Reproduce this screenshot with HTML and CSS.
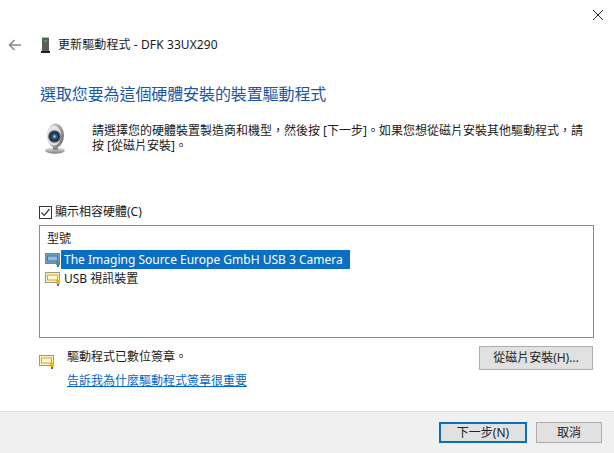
FILE: index.html
```html
<!DOCTYPE html>
<html lang="zh-Hant">
<head>
<meta charset="utf-8">
<title>更新驅動程式</title>
<link rel="stylesheet" href="styles.css">
</head>
<body>
<div class="dialog">
  <div class="titlebar">
    <svg class="close" width="12" height="12" viewBox="0 0 12 12"><path d="M1 1 L11 11 M11 1 L1 11" stroke="#222" stroke-width="1" fill="none"/></svg>
  </div>
  <div class="nav">
    <svg class="back" width="14" height="12" viewBox="0 0 14 12"><path d="M6.5 1 L1.5 6 L6.5 11 M1.5 6 H13" stroke="#8a8a8a" stroke-width="1.6" fill="none"/></svg>
    <svg class="device" width="9" height="16" viewBox="0 0 9 16"><rect x="1" y="0" width="7" height="14" fill="#5a5f5a"/><rect x="1" y="0" width="7" height="1" fill="#b8bcb8"/><rect x="3.5" y="3" width="2" height="2" fill="#35d04a"/><rect x="0" y="14" width="9" height="2" fill="#222"/></svg>
    <span class="nav-title">更新驅動程式 - DFK 33UX290</span>
  </div>
  <main class="content">
    <h1 class="heading">選取您要為這個硬體安裝的裝置驅動程式</h1>
    <div class="intro">
      <svg class="webcam" width="22" height="32" viewBox="0 0 22 32">
        <defs>
          <radialGradient id="lens"><stop offset="0" stop-color="#a8d6f0"/><stop offset="0.45" stop-color="#2b5f8c"/><stop offset="1" stop-color="#16202c"/></radialGradient>
          <linearGradient id="shell" x1="0" y1="0" x2="1" y2="0.6"><stop offset="0" stop-color="#e8e8e8"/><stop offset="1" stop-color="#7a7a7a"/></linearGradient>
          <linearGradient id="stand" x1="0" y1="0" x2="0" y2="1"><stop offset="0" stop-color="#ececec"/><stop offset="1" stop-color="#7d7d7d"/></linearGradient>
        </defs>
        <ellipse cx="11" cy="27.5" rx="10" ry="3.2" fill="url(#stand)"/>
        <rect x="9" y="22" width="5" height="5" fill="#8a8a8a"/>
        <ellipse cx="11.5" cy="12.5" rx="8.5" ry="12" fill="url(#shell)"/>
        <ellipse cx="10" cy="12.5" rx="7" ry="10" fill="#e4e4e4"/>
        <circle cx="10.5" cy="13.5" r="6.3" fill="#50565c"/>
        <circle cx="10.5" cy="13.5" r="4.8" fill="url(#lens)"/>
      </svg>
      <p class="intro-text">請選擇您的硬體裝置製造商和機型，然後按 [下一步]。如果您想從磁片安裝其他驅動程式，請按 [從磁片安裝]。</p>
    </div>
    <label class="check">
      <svg class="checkbox" width="13" height="13" viewBox="0 0 13 13"><rect x="0.5" y="0.5" width="12" height="12" fill="#fff" stroke="#333"/><path d="M2.5 6.5 L5.2 9.3 L10.5 3" stroke="#333" stroke-width="1.2" fill="none"/></svg>
      <span>顯示相容硬體(C)</span>
    </label>
    <div class="list">
      <div class="list-head">型號</div>
      <div class="row">
        <svg class="row-icon" width="16" height="14" viewBox="0 0 16 14"><rect x="0.5" y="0.5" width="14" height="10" fill="#6fa2c8" stroke="#76828c"/><rect x="2.5" y="3" width="10" height="5" fill="#8fbbdc" stroke="#3f78a8"/><rect x="11" y="8" width="4" height="4" fill="#5d8f6a"/><rect x="12" y="12" width="2" height="2" fill="#2d74b8"/></svg>
        <span class="row-text selected">The Imaging Source Europe GmbH USB 3 Camera</span>
      </div>
      <div class="row">
        <svg class="row-icon" width="16" height="14" viewBox="0 0 16 14"><rect x="0.5" y="0.5" width="14" height="10" fill="#fbf3c4" stroke="#9a9a88"/><rect x="2.5" y="3" width="10" height="5" fill="#fff8d8" stroke="#d9a520"/><rect x="11" y="8" width="4" height="4" fill="#eeb21a"/><rect x="12" y="12" width="2" height="2" fill="#2d74b8"/></svg>
        <span class="row-text">USB 視訊裝置</span>
      </div>
    </div>
    <div class="signature">
      <svg class="sig-icon" width="16" height="14" viewBox="0 0 16 14"><rect x="0.5" y="0.5" width="14" height="10" fill="#fbf3c4" stroke="#9a9a88"/><rect x="2.5" y="3" width="10" height="5" fill="#fff8d8" stroke="#d9a520"/><rect x="11" y="8" width="4" height="4" fill="#eeb21a"/><rect x="12" y="12" width="2" height="2" fill="#2d74b8"/></svg>
      <div class="sig-text">
        <div class="sig-line">驅動程式已數位簽章。</div>
        <a class="sig-link" href="#">告訴我為什麼驅動程式簽章很重要</a>
      </div>
      <button class="btn disk">從磁片安裝(H)...</button>
    </div>
  </main>
  <footer class="footer">
    <button class="btn next">下一步(N)</button>
    <button class="btn cancel">取消</button>
  </footer>
</div>
</body>
</html>
```
FILE: styles.css
```css
* { box-sizing: border-box; }
html, body { margin: 0; padding: 0; }
body {
  width: 614px;
  height: 453px;
  background: #fff;
  overflow: hidden;
  font-family: "Noto Sans", "Noto Sans CJK TC", sans-serif;
  font-size: 12px;
  color: #1a1a1a;
}
.dialog { display: flex; flex-direction: column; height: 453px; }
.titlebar { display: flex; justify-content: flex-end; height: 30px; padding: 9px 10px 0 0; }
.close { display: block; }
.nav { display: flex; align-items: center; height: 30px; padding-left: 8px; }
.back { margin-right: 19px; }
.device { margin-right: 8px; }
.nav-title { line-height: 16px; letter-spacing: 0.1px; }
.content { flex: 1; padding: 24px 20px 0 39px; display: flex; flex-direction: column; }
.heading { margin: 0 0 0 1px; font-size: 16px; font-weight: 400; line-height: 20px; letter-spacing: -0.1px; color: #1a58a6; }
.intro { display: flex; margin-top: 19px; padding-left: 5px; height: 82px; }
.webcam { margin-right: 26px; flex: none; }
.intro-text { margin: 0; width: 492px; line-height: 15px; }
.check { display: flex; align-items: center; gap: 3px; height: 14px; line-height: 14px; }
.checkbox { flex: none; }
.list { margin-top: 6px; height: 113px; width: 555px; border: 1px solid #8c8c8c; padding: 4px 0 0 5px; }
.list-head { padding-left: 2px; line-height: 17px; margin-bottom: 3px; }
.row { display: flex; align-items: center; height: 19px; }
.row-icon { flex: none; }
.row-text { line-height: 19px; padding: 0 7px 0 3px; }
.selected { background: #0a6fc2; color: #fff; }
.signature { display: flex; align-items: flex-start; margin-top: 8px; width: 554px; }
.sig-icon { flex: none; margin-top: 9px; }
.sig-text { flex: 1; margin-left: 12px; }
.sig-line { line-height: 18px; margin-top: 2px; }
.sig-link { display: block; margin-top: 6px; line-height: 17px; color: #0066cc; text-decoration: underline; }
.btn {
  font: inherit;
  color: #222;
  background: #e1e1e1;
  border: 1px solid #adadad;
  padding: 0;
  line-height: 16px;
}
.disk { flex: none; width: 114px; height: 24px; }
.footer {
  display: flex;
  justify-content: flex-end;
  gap: 9px;
  height: 42px;
  padding: 10px 12px 0 0;
  background: #f0f0f0;
  border-top: 1px solid #dfdfdf;
}
.next { width: 88px; height: 21px; border: 2px solid #0a6fb8; }
.cancel { width: 66px; height: 21px; }
```
